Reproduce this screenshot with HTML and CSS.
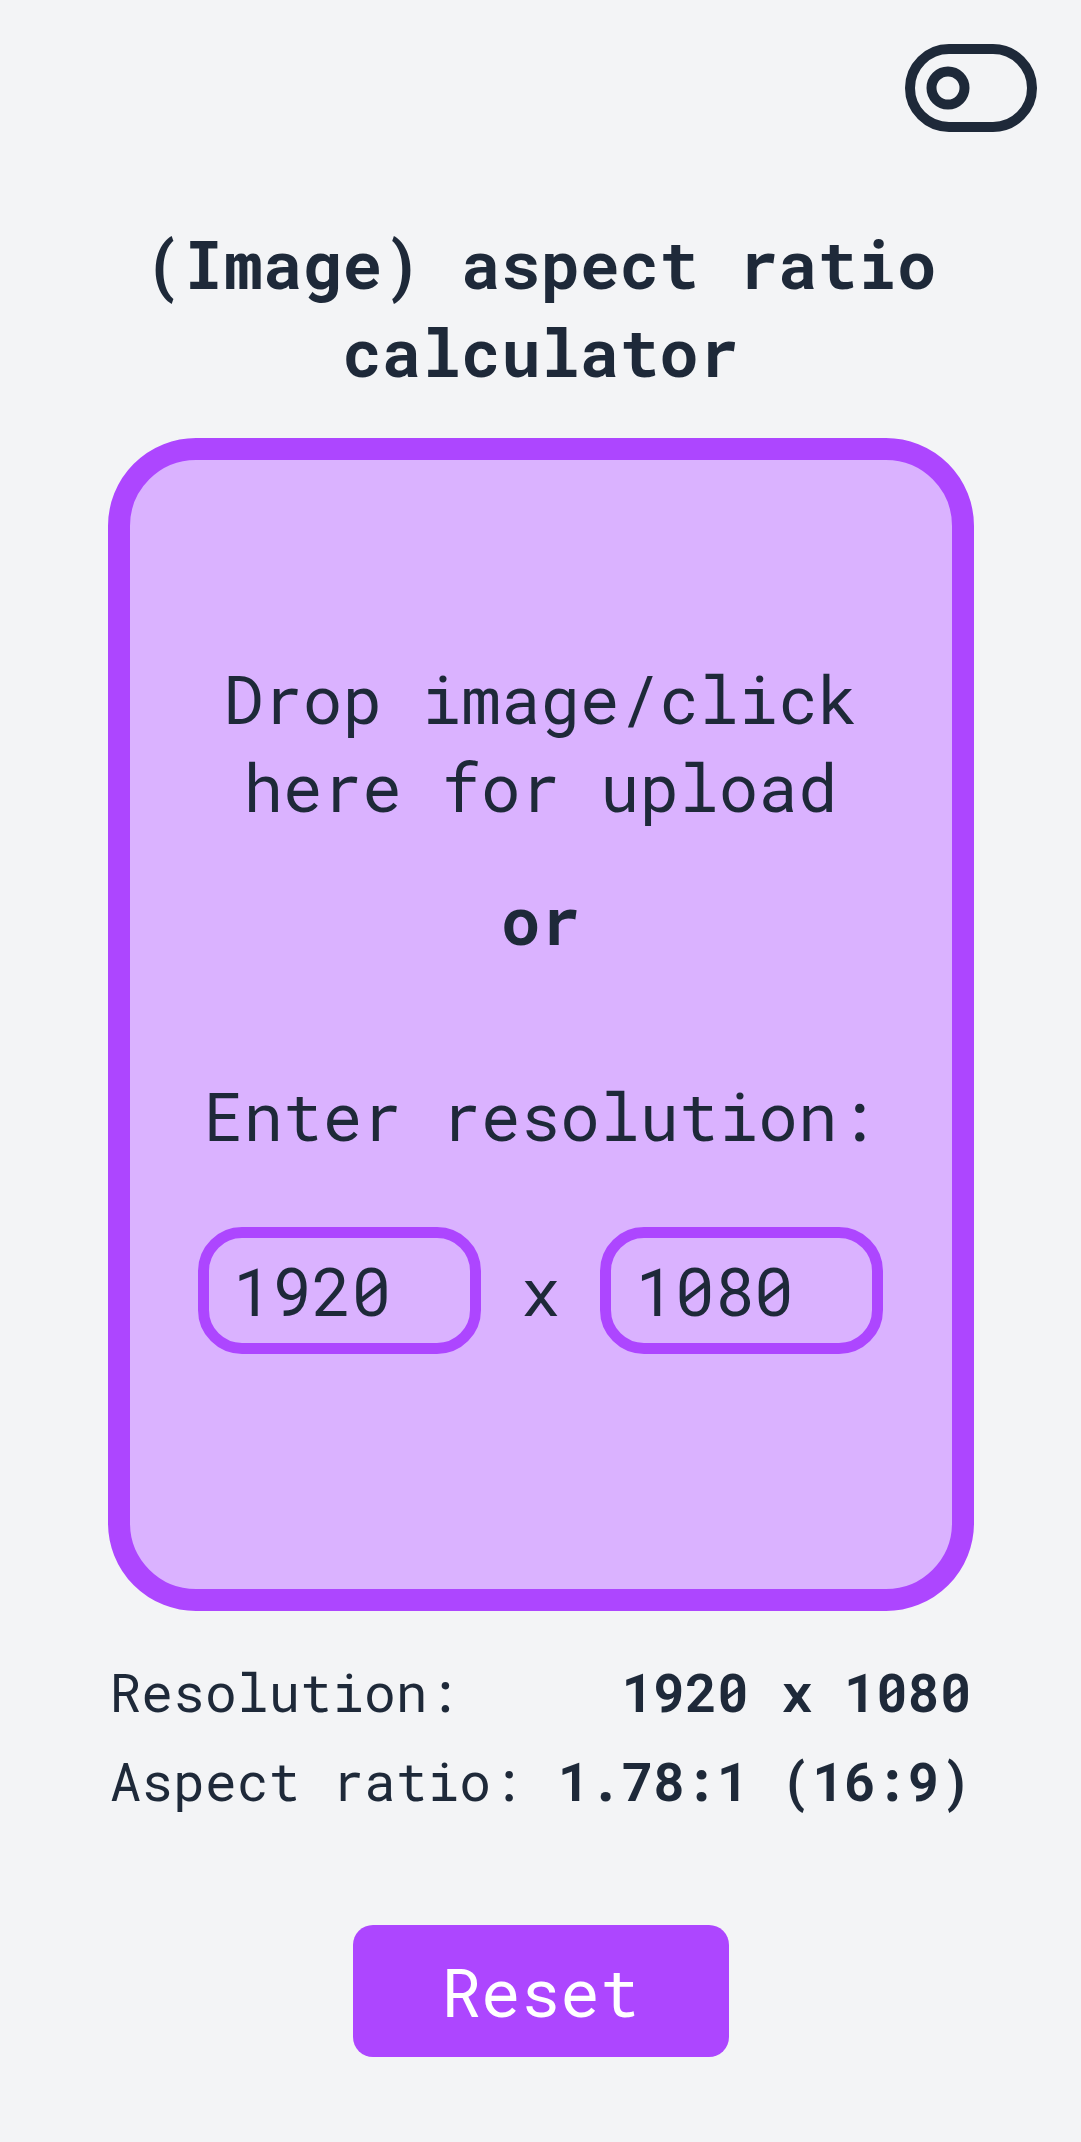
FILE: index.html
```html
<!DOCTYPE html>
<html lang="en">
<head>
<meta charset="utf-8">
<title>(Image) aspect ratio calculator</title>
<link rel="stylesheet" href="styles.css">
</head>
<body>
<header class="topbar">
  <button class="theme-toggle" aria-label="Toggle theme">
    <svg width="132" height="88" viewBox="0 0 132 88" fill="none" stroke="#1e2939" stroke-width="10">
      <rect x="5" y="5" width="122" height="78" rx="39"/>
      <circle cx="43" cy="44" r="16.5"/>
    </svg>
  </button>
</header>
<main class="main">
  <h1 class="title">(Image) aspect ratio calculator</h1>
  <section class="dropzone">
    <p class="drop-text">Drop image/click here for upload</p>
    <p class="or">or</p>
    <p class="enter">Enter resolution:</p>
    <div class="res-inputs">
      <input class="res-input" type="text" value="1920">
      <span class="times">x</span>
      <input class="res-input" type="text" value="1080">
    </div>
  </section>
  <dl class="results">
    <div class="result-row"><dt>Resolution:</dt><dd>1920 x 1080</dd></div>
    <div class="result-row"><dt>Aspect ratio:</dt><dd>1.78:1 (16:9)</dd></div>
  </dl>
  <div class="actions">
    <button class="reset">Reset</button>
  </div>
</main>
</body>
</html>
```
FILE: styles.css
```css
* { box-sizing: border-box; }
html, body { margin: 0; padding: 0; }
body {
  background: #f3f4f6;
  color: #1e2939;
  font-family: "Roboto Mono", "DejaVu Sans Mono", "Liberation Mono", monospace;
  width: 1081px;
  min-height: 2142px;
}
.topbar {
  display: flex;
  justify-content: flex-end;
  padding: 44px 44px 0 0;
}
.theme-toggle {
  background: none;
  border: 0;
  padding: 0;
  display: block;
  line-height: 0;
}
.main {
  display: flex;
  flex-direction: column;
  align-items: center;
}
.title {
  margin: 88px 0 0;
  width: 800px;
  text-align: center;
  font-size: 66px;
  line-height: 88px;
  font-weight: 700;
}
.dropzone {
  margin-top: 42px;
  width: 866px;
  height: 1173px;
  border: 22px solid #ad46ff;
  border-radius: 88px;
  background: #dab2ff;
  padding-top: 195px;
  display: flex;
  flex-direction: column;
  align-items: center;
  text-align: center;
  font-size: 66px;
  line-height: 88px;
}
.dropzone p { margin: 0; }
.drop-text { width: 700px; }
.or { margin-top: 45px !important; font-weight: 700; }
.enter { margin-top: 108px !important; }
.res-inputs {
  margin-top: 67px;
  display: flex;
  align-items: center;
  gap: 40px;
}
.res-input {
  width: 283px;
  height: 127px;
  border: 11px solid #ad46ff;
  border-radius: 44px;
  background: transparent;
  color: #1e2939;
  font-family: inherit;
  font-size: 66px;
  padding: 0 0 0 24px;
  outline: none;
}
.times { font-size: 66px; }
.results {
  margin: 36px 0 0;
  width: 866px;
  padding: 0 2px;
  font-size: 53px;
  line-height: 89px;
}
.result-row {
  display: flex;
  justify-content: space-between;
}
.result-row dt { margin: 0; }
.result-row dd { margin: 0; font-weight: 700; }
.actions {
  margin-top: 100px;
  display: flex;
  justify-content: center;
}
.reset {
  width: 376px;
  height: 132px;
  border: 0;
  border-radius: 20px;
  background: #ad46ff;
  color: #ffffff;
  font-family: inherit;
  font-size: 66px;
}
```
